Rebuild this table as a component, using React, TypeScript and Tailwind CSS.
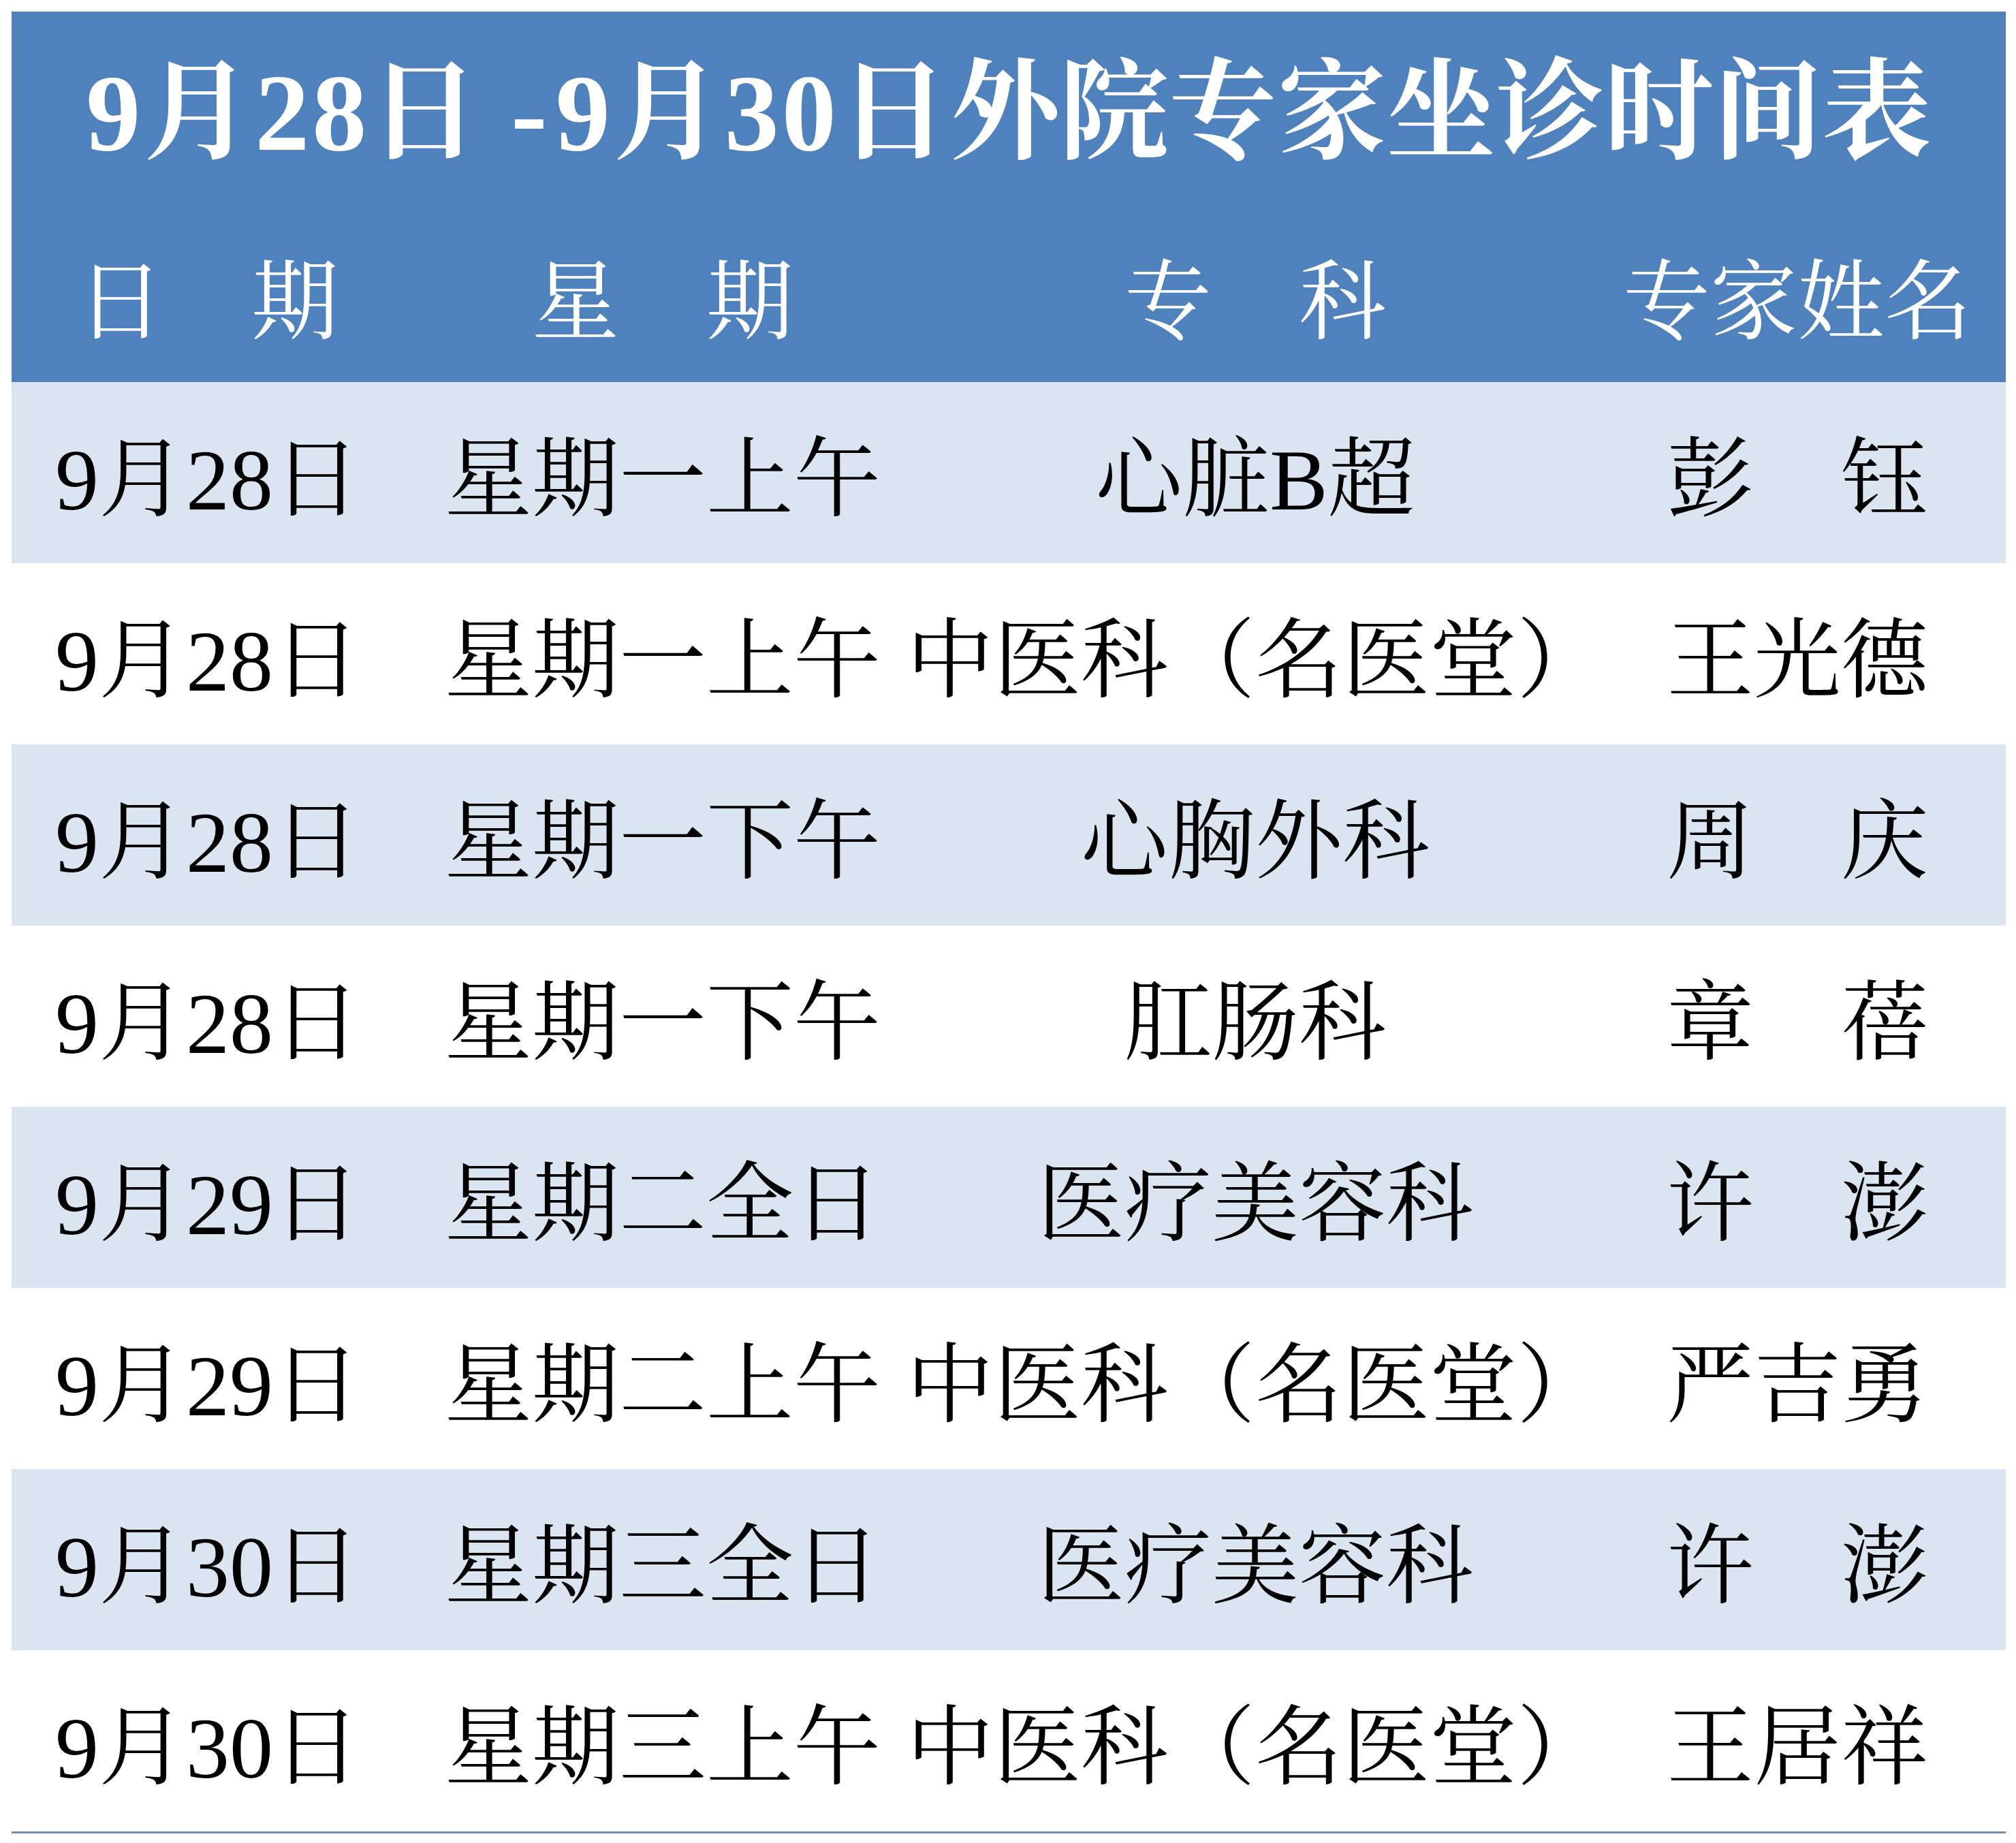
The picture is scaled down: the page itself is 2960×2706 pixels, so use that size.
const rows = [
  { date: "9月28日", week: "星期一上午", dept: "心脏B超", name: "彭　钰" },
  { date: "9月28日", week: "星期一上午", dept: "中医科（名医堂）", name: "王光德" },
  { date: "9月28日", week: "星期一下午", dept: "心胸外科", name: "周　庆" },
  { date: "9月28日", week: "星期一下午", dept: "肛肠科", name: "章　蓓" },
  { date: "9月29日", week: "星期二全日", dept: "医疗美容科", name: "许　澎" },
  { date: "9月29日", week: "星期二上午", dept: "中医科（名医堂）", name: "严吉勇" },
  { date: "9月30日", week: "星期三全日", dept: "医疗美容科", name: "许　澎" },
  { date: "9月30日", week: "星期三上午", dept: "中医科（名医堂）", name: "王居祥" },
];

// fixed column widths, taken from the sheet
const cols = "grid grid-cols-[576px_760px_980px_612px]";

function Cell({ children }: { children: React.ReactNode }) {
  return (
    <div className="flex items-center justify-center whitespace-nowrap">
      {children}
    </div>
  );
}

export default function App() {
  return (
    <div className="w-[2960px] h-[2706px] bg-white pt-[17px] pl-[17px] pr-[15px] font-['Liberation_Serif','Noto_Serif_CJK_SC','Noto_Sans_CJK_SC',serif]">
      {/* Header */}
      <div className="h-[544px] bg-[#4f81bd] text-white">
        <div className="h-[280px] pt-[18px] flex items-center justify-center">
          <h1 className="text-[160px] leading-none font-bold whitespace-nowrap">
            <span className="tracking-[4px]">9月28日</span>
            <span className="ml-[44px] mr-[12px]">-</span>
            <span className="tracking-[4px]">9月30日</span>
            外院专家坐诊时间表
          </h1>
        </div>
        <div className={`${cols} h-[264px] mt-[16px] text-[128px] leading-none`}>
          <Cell>日　期</Cell>
          <Cell>星　期</Cell>
          <Cell>专　科</Cell>
          <Cell>专家姓名</Cell>
        </div>
      </div>

      {/* Rows */}
      {rows.map((r, i) => (
        <div
          key={i}
          className={`${cols} h-[266px] pt-[22px] text-[128px] leading-none text-black ${
            i % 2 === 0 ? "bg-[#dbe5f1]" : "bg-white"
          }`}
        >
          <Cell>{r.date}</Cell>
          <Cell>{r.week}</Cell>
          <Cell>{r.dept}</Cell>
          <Cell>{r.name}</Cell>
        </div>
      ))}
      <div className="h-[3px] bg-[#6f8fb8]" />
    </div>
  );
}
